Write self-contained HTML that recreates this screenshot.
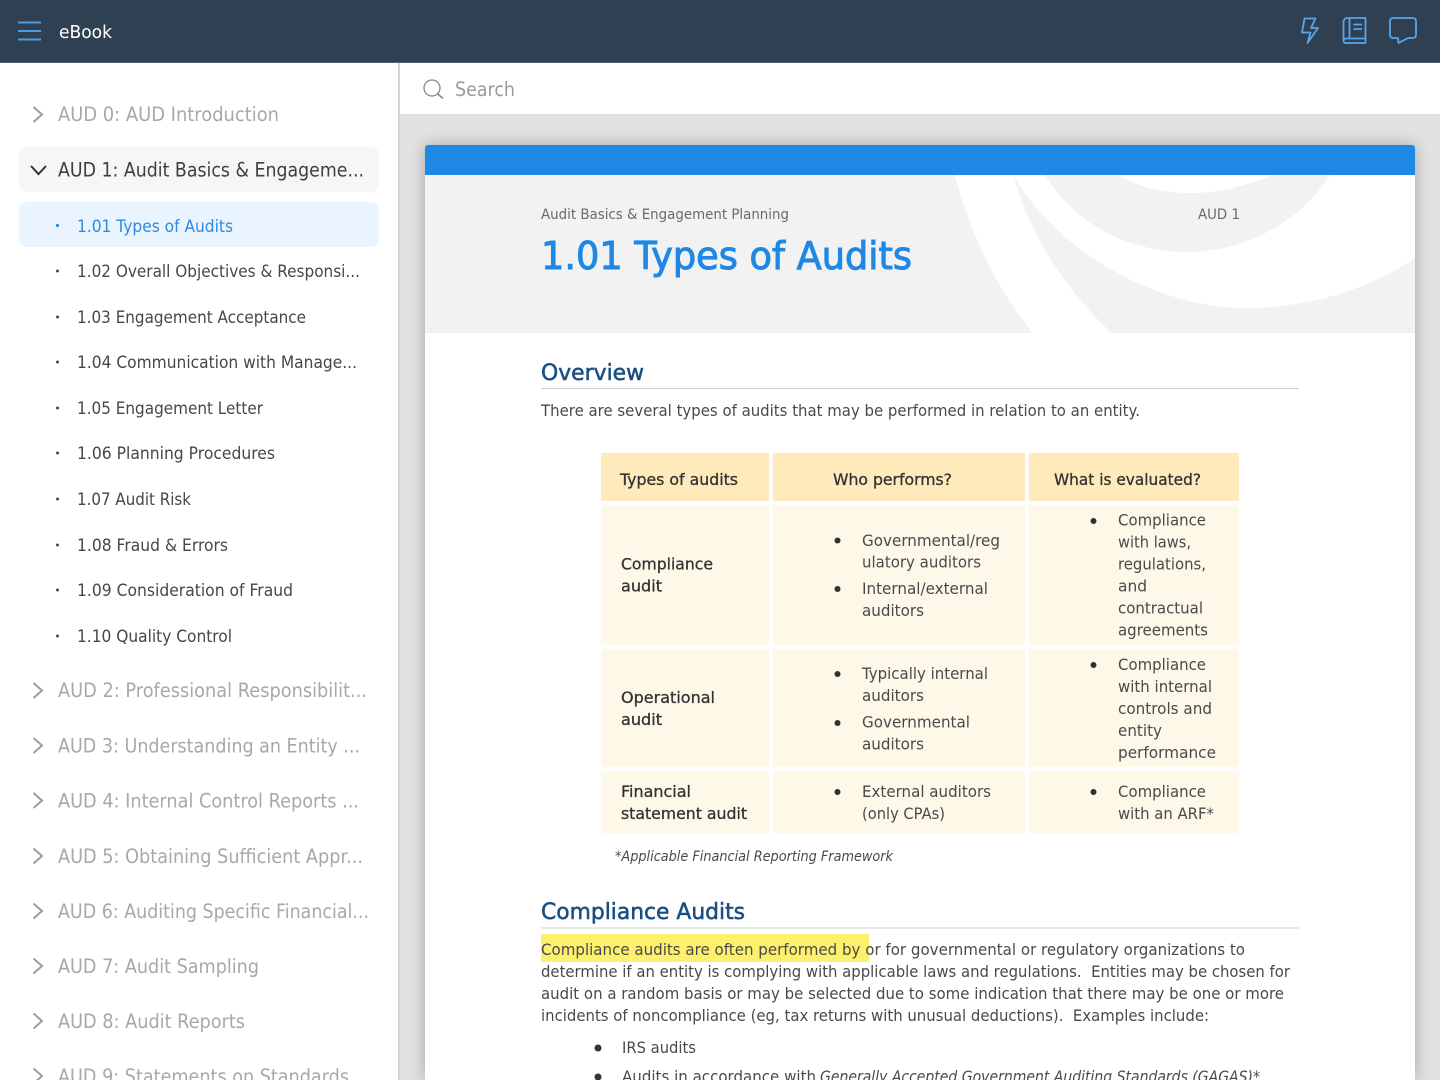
<!DOCTYPE html>
<html lang="en"><head><meta charset="utf-8"><title>eBook</title>
<style>
html,body{margin:0;padding:0;width:1440px;height:1080px;overflow:hidden;background:#fff}
#bg{position:absolute;left:400px;top:114px;width:1040px;height:966px;background:#e2e2e2;overflow:hidden}
#card{position:absolute;left:25px;top:31px;width:990px;height:935px;background:#fff;border-radius:3px 3px 0 0;box-shadow:0 0 16px rgba(0,0,0,.28)}
svg{position:absolute;left:0;top:0}
text{font-family:"DejaVu Sans","Liberation Sans",sans-serif;white-space:pre}
.ch{font-size:19.5px;fill:#a8a8a8}
.it{font-size:16.5px;fill:#474747}
.b{font-size:15.6px;fill:#4a4a4a}
.s{font-size:15.6px;fill:#333;stroke:#333;stroke-width:.3}
.h{font-size:22.5px;fill:#1b4f82;stroke:#1b4f82;stroke-width:.55}
.p{font-size:16px;fill:#4a4a4a}
</style></head><body>
<div id="bg"><div id="card"></div></div>
<svg width="1440" height="1080" viewBox="0 0 1440 1080">
<!-- top bar -->
<rect x="0" y="0" width="1440" height="62" fill="#2f4053"/>
<rect x="0" y="62" width="1440" height="1" fill="#56626f"/>
<g fill="#4c9ce2"><rect x="18" y="21.5" width="23" height="2"/><rect x="18" y="30" width="23" height="2"/><rect x="18" y="38.5" width="23" height="2"/></g>
<text x="59" y="38" font-size="17.6" fill="#fff" textLength="53" lengthAdjust="spacingAndGlyphs">eBook</text>
<g fill="none" stroke="#5aa5e6" stroke-width="1.8" stroke-linejoin="round">
<path d="M1304.5,18.5 H1315.5 L1311,28 H1318 L1307.5,43 L1310.5,32.5 H1302 Z"/>
<path d="M1343.5,40.5 V22 a4,4 0 0 1 4,-4 H1365.5 V38.5 H1346 a2.5,2.3 0 0 0 -2.5,2.2 a2.2,2.2 0 0 0 2.2,2.3 H1365.5 V38.5"/>
<path d="M1349.5,18 V38.5 M1353.5,24.5 H1362 M1353.5,29 H1362"/>
<path d="M1393,18 H1413 a3,3 0 0 1 3,3 V35 a3,3 0 0 1 -3,3 H1408 L1398.5,43 L1398,38 H1393 a3,3 0 0 1 -3,-3 V21 a3,3 0 0 1 3,-3 Z"/>
</g>
<!-- sidebar -->
<rect x="398" y="63" width="2" height="1017" fill="#d4d4d4"/>
<rect x="19" y="147" width="360" height="45" rx="8" fill="#f6f6f6"/>
<rect x="19" y="202" width="360" height="45" rx="8" fill="#e9f4fe"/>
<g fill="none" stroke="#9c9c9c" stroke-width="2">
<path d="M33.5,107 L42,114.5 L33.5,122"/>
<path d="M33.5,683 L42,690.5 L33.5,698"/>
<path d="M33.5,738 L42,745.5 L33.5,753"/>
<path d="M33.5,793 L42,800.5 L33.5,808"/>
<path d="M33.5,848.500 L42,856 L33.5,863.500"/>
<path d="M33.5,903.500 L42,911 L33.5,918.500"/>
<path d="M33.5,958.500 L42,966 L33.5,973.500"/>
<path d="M33.5,1013.500 L42,1021 L33.5,1028.500"/>
<path d="M33.5,1068.500 L42,1076 L33.5,1083.500"/>
</g>
<path d="M31,166 L38.5,174 L46,166" fill="none" stroke="#333" stroke-width="2"/>
<text class="ch" x="58" y="121" textLength="221" lengthAdjust="spacingAndGlyphs">AUD 0: AUD Introduction</text>
<text class="ch" x="58" y="176.500" textLength="306" lengthAdjust="spacingAndGlyphs" style="fill:#3f3f3f">AUD 1: Audit Basics &amp; Engageme...</text>
<text class="ch" x="58" y="697" textLength="309" lengthAdjust="spacingAndGlyphs">AUD 2: Professional Responsibilit...</text>
<text class="ch" x="58" y="752.500" textLength="302" lengthAdjust="spacingAndGlyphs">AUD 3: Understanding an Entity ...</text>
<text class="ch" x="58" y="807.500" textLength="301" lengthAdjust="spacingAndGlyphs">AUD 4: Internal Control Reports ...</text>
<text class="ch" x="58" y="863" textLength="305" lengthAdjust="spacingAndGlyphs">AUD 5: Obtaining Sufficient Appr...</text>
<text class="ch" x="58" y="918" textLength="311" lengthAdjust="spacingAndGlyphs">AUD 6: Auditing Specific Financial...</text>
<text class="ch" x="58" y="973" textLength="201" lengthAdjust="spacingAndGlyphs">AUD 7: Audit Sampling</text>
<text class="ch" x="58" y="1028" textLength="187" lengthAdjust="spacingAndGlyphs">AUD 8: Audit Reports</text>
<text class="ch" x="58" y="1083" textLength="291" lengthAdjust="spacingAndGlyphs">AUD 9: Statements on Standards</text>
<g fill="#474747">
<circle cx="57.500" cy="271" r="1.5"/><circle cx="57.500" cy="317" r="1.5"/><circle cx="57.500" cy="362" r="1.5"/><circle cx="57.500" cy="408" r="1.5"/><circle cx="57.500" cy="453" r="1.5"/><circle cx="57.500" cy="499" r="1.5"/><circle cx="57.500" cy="545" r="1.5"/><circle cx="57.500" cy="590" r="1.5"/><circle cx="57.500" cy="636" r="1.5"/>
</g>
<circle cx="57.500" cy="225.500" r="1.6" fill="#2f8ade"/>
<text class="it" x="77" y="232" textLength="156" lengthAdjust="spacingAndGlyphs" style="fill:#2f8ade">1.01 Types of Audits</text>
<text class="it" x="77" y="277" textLength="283" lengthAdjust="spacingAndGlyphs">1.02 Overall Objectives &amp; Responsi...</text>
<text class="it" x="77" y="323" textLength="229" lengthAdjust="spacingAndGlyphs">1.03 Engagement Acceptance</text>
<text class="it" x="77" y="368" textLength="280" lengthAdjust="spacingAndGlyphs">1.04 Communication with Manage...</text>
<text class="it" x="77" y="414" textLength="186" lengthAdjust="spacingAndGlyphs">1.05 Engagement Letter</text>
<text class="it" x="77" y="459" textLength="198" lengthAdjust="spacingAndGlyphs">1.06 Planning Procedures</text>
<text class="it" x="77" y="505" textLength="114" lengthAdjust="spacingAndGlyphs">1.07 Audit Risk</text>
<text class="it" x="77" y="551" textLength="151" lengthAdjust="spacingAndGlyphs">1.08 Fraud &amp; Errors</text>
<text class="it" x="77" y="596" textLength="216" lengthAdjust="spacingAndGlyphs">1.09 Consideration of Fraud</text>
<text class="it" x="77" y="642" textLength="155" lengthAdjust="spacingAndGlyphs">1.10 Quality Control</text>
<!-- search -->
<circle cx="432" cy="88" r="8" fill="none" stroke="#858585" stroke-width="1.300"/>
<path d="M437.800,94 L443,98.500" stroke="#858585" stroke-width="1.600" fill="none"/>
<text x="455" y="96" font-size="19.500" fill="#9a9a9a" textLength="60" lengthAdjust="spacingAndGlyphs">Search</text>
<!-- card header -->
<path d="M425,148 a3,3 0 0 1 3,-3 H1412 a3,3 0 0 1 3,3 V175 H425 Z" fill="#1e88e5"/>
<g fill="#f2f2f3">
<path d="M425,175 H955 C968,225 993,285 1033,333 H425 Z"/>
<path d="M1013,175 C1030,235 1065,290 1112,333 H1415 V258 C1365,292 1305,308 1245,308 C1160,308 1060,255 1013,175 Z"/>
<path d="M1045,175 C1075,225 1130,252 1187,252 C1245,252 1300,222 1330,175 Z"/>
</g>
<path d="M1118,175 C1140,188 1165,193 1193,193 C1220,193 1245,186 1273,175 Z" fill="#fff"/>
<text x="541" y="219" font-size="14.300" fill="#6a6a6a" textLength="248" lengthAdjust="spacingAndGlyphs">Audit Basics &amp; Engagement Planning</text>
<text x="1198" y="219" font-size="14.300" fill="#6a6a6a" textLength="42" lengthAdjust="spacingAndGlyphs">AUD 1</text>
<text x="541" y="269" font-size="38" fill="#1e88e5" stroke="#1e88e5" stroke-width="1" textLength="371" lengthAdjust="spacingAndGlyphs">1.01 Types of Audits</text>
<!-- overview -->
<text class="h" x="541" y="380" textLength="103" lengthAdjust="spacingAndGlyphs">Overview</text>
<rect x="541" y="388" width="758" height="1" fill="#cfcfcf"/>
<text class="p" x="541" y="416" textLength="599" lengthAdjust="spacingAndGlyphs">There are several types of audits that may be performed in relation to an entity.</text>
<!-- table -->
<g fill="#feeaba">
<rect x="601" y="453" width="168" height="48"/><rect x="773" y="453" width="252" height="48"/><rect x="1029" y="453" width="210" height="48"/>
</g>
<g fill="#fdf8e8">
<rect x="601" y="505" width="168" height="140"/><rect x="773" y="505" width="252" height="140"/><rect x="1029" y="505" width="210" height="140"/>
<rect x="601" y="649" width="168" height="118"/><rect x="773" y="649" width="252" height="118"/><rect x="1029" y="649" width="210" height="118"/>
<rect x="601" y="771" width="168" height="62"/><rect x="773" y="771" width="252" height="62"/><rect x="1029" y="771" width="210" height="62"/>
</g>
<text class="s" x="620" y="485" textLength="118" lengthAdjust="spacingAndGlyphs">Types of audits</text>
<text class="s" x="833" y="485" textLength="119" lengthAdjust="spacingAndGlyphs">Who performs?</text>
<text class="s" x="1054" y="485" textLength="147" lengthAdjust="spacingAndGlyphs">What is evaluated?</text>
<text class="s" x="621" y="569.500" textLength="92" lengthAdjust="spacingAndGlyphs">Compliance</text>
<text class="s" x="621" y="591.500" textLength="41" lengthAdjust="spacingAndGlyphs">audit</text>
<text class="s" x="621" y="703" textLength="94" lengthAdjust="spacingAndGlyphs">Operational</text>
<text class="s" x="621" y="725" textLength="41" lengthAdjust="spacingAndGlyphs">audit</text>
<text class="s" x="621" y="797" textLength="70" lengthAdjust="spacingAndGlyphs">Financial</text>
<text class="s" x="621" y="819" textLength="126" lengthAdjust="spacingAndGlyphs">statement audit</text>
<g fill="#333">
<circle cx="837.500" cy="540.500" r="3"/><circle cx="837.500" cy="589" r="3"/><circle cx="837.500" cy="674" r="3"/><circle cx="837.500" cy="723" r="3"/><circle cx="837.500" cy="792" r="3"/>
<circle cx="1093.500" cy="521" r="3"/><circle cx="1093.500" cy="665" r="3"/><circle cx="1093.500" cy="792" r="3"/>
<circle cx="598" cy="1048" r="3.500"/><circle cx="598" cy="1077" r="3.500"/>
</g>
<text class="b" x="862" y="546" textLength="138" lengthAdjust="spacingAndGlyphs">Governmental/reg</text>
<text class="b" x="862" y="567.500" textLength="119" lengthAdjust="spacingAndGlyphs">ulatory auditors</text>
<text class="b" x="862" y="594" textLength="126" lengthAdjust="spacingAndGlyphs">Internal/external</text>
<text class="b" x="862" y="616" textLength="62" lengthAdjust="spacingAndGlyphs">auditors</text>
<text class="b" x="862" y="679" textLength="126" lengthAdjust="spacingAndGlyphs">Typically internal</text>
<text class="b" x="862" y="701" textLength="62" lengthAdjust="spacingAndGlyphs">auditors</text>
<text class="b" x="862" y="727.500" textLength="108" lengthAdjust="spacingAndGlyphs">Governmental</text>
<text class="b" x="862" y="749.500" textLength="62" lengthAdjust="spacingAndGlyphs">auditors</text>
<text class="b" x="862" y="797" textLength="129" lengthAdjust="spacingAndGlyphs">External auditors</text>
<text class="b" x="862" y="819" textLength="83" lengthAdjust="spacingAndGlyphs">(only CPAs)</text>
<text class="b" x="1118" y="525.500" textLength="88" lengthAdjust="spacingAndGlyphs">Compliance</text>
<text class="b" x="1118" y="547.500" textLength="73" lengthAdjust="spacingAndGlyphs">with laws,</text>
<text class="b" x="1118" y="569.500" textLength="88" lengthAdjust="spacingAndGlyphs">regulations,</text>
<text class="b" x="1118" y="591.500" textLength="29" lengthAdjust="spacingAndGlyphs">and</text>
<text class="b" x="1118" y="613.500" textLength="85" lengthAdjust="spacingAndGlyphs">contractual</text>
<text class="b" x="1118" y="635.500" textLength="90" lengthAdjust="spacingAndGlyphs">agreements</text>
<text class="b" x="1118" y="670" textLength="88" lengthAdjust="spacingAndGlyphs">Compliance</text>
<text class="b" x="1118" y="692" textLength="94" lengthAdjust="spacingAndGlyphs">with internal</text>
<text class="b" x="1118" y="714" textLength="94" lengthAdjust="spacingAndGlyphs">controls and</text>
<text class="b" x="1118" y="736" textLength="44" lengthAdjust="spacingAndGlyphs">entity</text>
<text class="b" x="1118" y="758" textLength="98" lengthAdjust="spacingAndGlyphs">performance</text>
<text class="b" x="1118" y="797" textLength="88" lengthAdjust="spacingAndGlyphs">Compliance</text>
<text class="b" x="1118" y="819" textLength="96" lengthAdjust="spacingAndGlyphs">with an ARF*</text>
<text x="615" y="861" font-size="14.300" font-style="italic" fill="#4a4a4a" textLength="278" lengthAdjust="spacingAndGlyphs">*Applicable Financial Reporting Framework</text>
<!-- compliance audits -->
<text class="h" x="541" y="919" textLength="204" lengthAdjust="spacingAndGlyphs">Compliance Audits</text>
<rect x="541" y="927.500" width="758" height="1" fill="#cfcfcf"/>
<rect x="541" y="934" width="328" height="28" fill="#fdf06c"/>
<text class="p" x="541" y="955" textLength="704" lengthAdjust="spacingAndGlyphs">Compliance audits are often performed by or for governmental or regulatory organizations to</text>
<text class="p" x="541" y="977" textLength="749" lengthAdjust="spacingAndGlyphs">determine if an entity is complying with applicable laws and regulations.  Entities may be chosen for</text>
<text class="p" x="541" y="999" textLength="743" lengthAdjust="spacingAndGlyphs">audit on a random basis or may be selected due to some indication that there may be one or more</text>
<text class="p" x="541" y="1021" textLength="668" lengthAdjust="spacingAndGlyphs">incidents of noncompliance (eg, tax returns with unusual deductions).  Examples include:</text>
<text class="p" x="622" y="1053" textLength="74" lengthAdjust="spacingAndGlyphs">IRS audits</text>
<text class="p" x="622" y="1082" textLength="194" lengthAdjust="spacingAndGlyphs">Audits in accordance with</text>
<text class="p" x="820" y="1082" font-style="italic" textLength="440" lengthAdjust="spacingAndGlyphs">Generally Accepted Government Auditing Standards (GAGAS)*</text>
</svg>
</body></html>
